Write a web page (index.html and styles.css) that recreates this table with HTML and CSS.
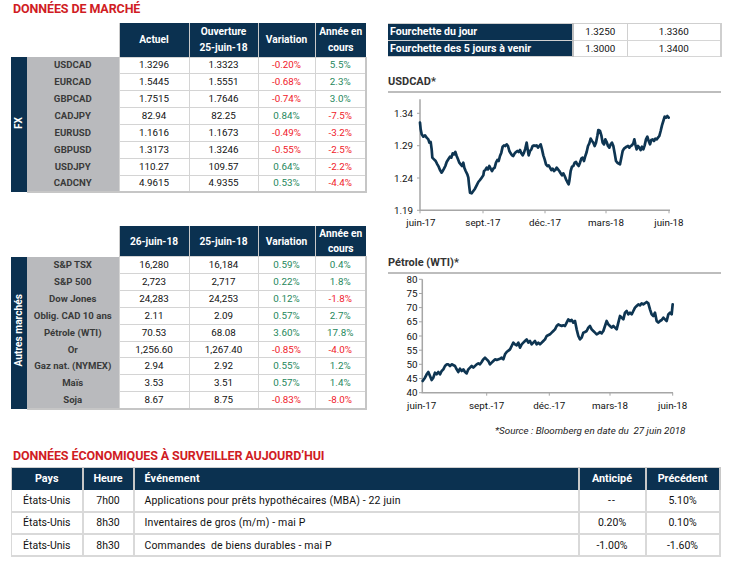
FILE: index.html
```html
<!DOCTYPE html>
<html lang="fr">
<head>
<meta charset="utf-8">
<title>Données de marché</title>
<link rel="stylesheet" href="styles.css">
</head>
<body>
<div class="page">
  <div class="top">
    <section class="left">
      <h1 class="title">DONNÉES DE MARCHÉ</h1>
      <table class="mkt fx">
        <colgroup><col class="c-side"><col class="c-lbl"><col class="c-a"><col class="c-b"><col class="c-c"><col class="c-d"></colgroup>
        <thead>
          <tr><th class="blank" colspan="2"></th><th>Actuel</th><th>Ouverture<br>25-juin-18</th><th>Variation</th><th>Année en<br>cours</th></tr>
        </thead>
        <tbody>
          <tr><td class="side" rowspan="8"><span>FX</span></td><td class="lbl">USDCAD</td><td>1.3296</td><td>1.3323</td><td class="neg">-0.20%</td><td class="pos">5.5%</td></tr>
          <tr><td class="lbl">EURCAD</td><td>1.5445</td><td>1.5551</td><td class="neg">-0.68%</td><td class="pos">2.3%</td></tr>
          <tr><td class="lbl">GBPCAD</td><td>1.7515</td><td>1.7646</td><td class="neg">-0.74%</td><td class="pos">3.0%</td></tr>
          <tr><td class="lbl">CADJPY</td><td>82.94</td><td>82.25</td><td class="pos">0.84%</td><td class="neg">-7.5%</td></tr>
          <tr><td class="lbl">EURUSD</td><td>1.1616</td><td>1.1673</td><td class="neg">-0.49%</td><td class="neg">-3.2%</td></tr>
          <tr><td class="lbl">GBPUSD</td><td>1.3173</td><td>1.3246</td><td class="neg">-0.55%</td><td class="neg">-2.5%</td></tr>
          <tr><td class="lbl">USDJPY</td><td>110.27</td><td>109.57</td><td class="pos">0.64%</td><td class="neg">-2.2%</td></tr>
          <tr><td class="lbl">CADCNY</td><td>4.9615</td><td>4.9355</td><td class="pos">0.53%</td><td class="neg">-4.4%</td></tr>
        </tbody>
      </table>

      <table class="mkt oth">
        <colgroup><col class="c-side"><col class="c-lbl"><col class="c-a"><col class="c-b"><col class="c-c"><col class="c-d"></colgroup>
        <thead>
          <tr><th class="blank" colspan="2"></th><th>26-juin-18</th><th>25-juin-18</th><th>Variation</th><th>Année en<br>cours</th></tr>
        </thead>
        <tbody>
          <tr><td class="side" rowspan="9"><span>Autres marchés</span></td><td class="lbl">S&amp;P TSX</td><td>16,280</td><td>16,184</td><td class="pos">0.59%</td><td class="pos">0.4%</td></tr>
          <tr><td class="lbl">S&amp;P 500</td><td>2,723</td><td>2,717</td><td class="pos">0.22%</td><td class="pos">1.8%</td></tr>
          <tr><td class="lbl">Dow Jones</td><td>24,283</td><td>24,253</td><td class="pos">0.12%</td><td class="neg">-1.8%</td></tr>
          <tr><td class="lbl">Oblig. CAD 10 ans</td><td>2.11</td><td>2.09</td><td class="pos">0.57%</td><td class="pos">2.7%</td></tr>
          <tr><td class="lbl">Pétrole (WTI)</td><td>70.53</td><td>68.08</td><td class="pos">3.60%</td><td class="pos">17.8%</td></tr>
          <tr><td class="lbl">Or</td><td>1,256.60</td><td>1,267.40</td><td class="neg">-0.85%</td><td class="neg">-4.0%</td></tr>
          <tr><td class="lbl">Gaz nat. (NYMEX)</td><td>2.94</td><td>2.92</td><td class="pos">0.55%</td><td class="pos">1.2%</td></tr>
          <tr><td class="lbl">Maïs</td><td>3.53</td><td>3.51</td><td class="pos">0.57%</td><td class="pos">1.4%</td></tr>
          <tr><td class="lbl">Soja</td><td>8.67</td><td>8.75</td><td class="neg">-0.83%</td><td class="neg">-8.0%</td></tr>
        </tbody>
      </table>
    </section>

    <section class="right">
      <table class="range">
        <colgroup><col class="r-h"><col class="r-a"><col class="r-b"></colgroup>
        <tr><th>Fourchette du jour</th><td>1.3250</td><td>1.3360</td></tr>
        <tr><th>Fourchette des 5 jours à venir</th><td>1.3000</td><td>1.3400</td></tr>
      </table>

      <h2 class="chart-title t1">USDCAD*</h2>
      <svg class="chart" width="362" height="140" viewBox="0 0 362 140">
        <path class="axis" d="M40 6.3V117.3H290"/>
        <path class="tick" d="M37 20.3H40M37 52.7H40M37 85H40M37 117.3H40M40 117.3v3M103 117.3v3M165 117.3v3M226 117.3v3M289 117.3v3"/>
        <text class="ylab" x="33" y="20.3">1.34</text>
        <text class="ylab" x="33" y="52.7">1.29</text>
        <text class="ylab" x="33" y="85">1.24</text>
        <text class="ylab" x="33" y="117.3">1.19</text>
        <text class="xlab" x="41" y="129.5">juin-17</text>
        <text class="xlab" x="103" y="129.5">sept.-17</text>
        <text class="xlab" x="165" y="129.5">déc.-17</text>
        <text class="xlab" x="226" y="129.5">mars-18</text>
        <text class="xlab" x="289" y="129.5">juin-18</text>
        <g transform="translate(0,3) scale(0.33333)">
          <polyline class="series" points="120,80 122,100 125,115 130,122 135,118 140,125 145,130 148,140 152,138 155,160 157,185 162,190 167,195 172,205 176,212 180,222 185,230 188,225 192,218 196,210 200,198 205,190 210,182 214,185 218,172 222,175 226,168 230,180 234,190 238,200 242,205 246,210 250,200 253,215 257,225 262,235 265,245 267,265 270,290 275,292 280,285 285,278 290,268 295,258 300,252 305,245 310,238 312,225 316,222 320,215 324,220 328,210 332,218 336,225 340,218 344,215 348,200 352,192 356,195 360,180 364,170 368,152 372,148 376,150 380,145 384,150 388,165 392,172 396,178 400,180 404,172 408,168 412,165 416,168 420,162 424,172 428,178 432,170 436,158 440,140 443,160 446,178 450,165 454,160 458,150 462,148 466,150 470,148 474,155 478,150 482,145 486,160 490,178 494,190 498,205 502,210 506,208 510,215 514,222 518,218 522,225 526,222 530,215 534,220 538,225 542,232 546,238 550,232 554,240 558,250 562,258 566,265 568,255 572,225 576,212 580,210 584,200 588,198 592,205 596,210 600,200 604,188 608,185 612,195 616,180 620,168 624,150 628,142 632,128 636,135 640,140 644,150 648,140 652,120 655,102 660,105 664,118 668,140 672,145 676,130 680,138 684,150 688,155 692,145 696,140 700,150 704,172 708,195 712,200 716,203 720,205 724,185 728,165 732,158 736,155 740,152 744,150 748,155 752,150 756,148 760,142 763,130 766,145 770,160 774,150 778,155 782,162 786,152 790,160 794,148 798,130 802,122 806,135 810,145 814,132 818,130 822,135 826,128 830,130 834,125 838,120 842,105 846,88 850,75 854,62 858,65 862,60 866,65"/>
        </g>
      </svg>

      <h2 class="chart-title t2">Pétrole (WTI)*</h2>
      <svg class="chart" width="362" height="142" viewBox="0 0 362 142">
        <path class="axis" d="M42.3 5.3V118.7H293"/>
        <path class="tick" d="M39 5.3H42.3M39 19.5H42.3M39 33.6H42.3M39 47.8H42.3M39 62H42.3M39 76.2H42.3M39 90.3H42.3M39 104.5H42.3M39 118.7H42.3M106.7 118.7v3M169.3 118.7v3M230 118.7v3M292.7 118.7v3"/>
        <text class="ylab" x="37.5" y="5.3">80</text>
        <text class="ylab" x="37.5" y="19.5">75</text>
        <text class="ylab" x="37.5" y="33.6">70</text>
        <text class="ylab" x="37.5" y="47.8">65</text>
        <text class="ylab" x="37.5" y="62">60</text>
        <text class="ylab" x="37.5" y="76.2">55</text>
        <text class="ylab" x="37.5" y="90.3">50</text>
        <text class="ylab" x="37.5" y="104.5">45</text>
        <text class="ylab" x="37.5" y="118.7">40</text>
        <text class="xlab" x="41.7" y="131.5">juin-17</text>
        <text class="xlab" x="106.7" y="131.5">sept.-17</text>
        <text class="xlab" x="169.3" y="131.5">déc.-17</text>
        <text class="xlab" x="230" y="131.5">mars-18</text>
        <text class="xlab" x="292.7" y="131.5">juin-18</text>
        <g transform="translate(0,-28) scale(0.33333)">
          <polyline class="series" points="128,405 135,395 140,385 145,378 150,390 155,402 160,395 165,380 170,385 175,378 180,385 185,375 190,370 195,360 200,355 205,355 210,360 215,355 225,360 230,370 235,378 240,368 245,375 250,370 255,378 260,382 265,370 270,365 275,360 280,365 290,355 295,352 300,355 305,348 310,340 315,335 320,340 325,345 330,355 335,350 340,345 345,340 350,342 360,338 365,335 370,340 375,325 380,318 390,310 395,300 400,290 405,295 410,298 415,290 420,305 425,295 430,290 435,285 440,280 445,290 450,285 455,295 460,290 465,285 470,295 475,290 480,295 490,285 495,280 500,270 510,265 515,260 520,255 525,250 530,240 535,235 540,238 545,240 550,238 555,240 560,230 565,220 570,225 575,222 580,230 585,225 590,250 595,270 600,280 605,275 610,260 615,258 620,255 625,245 630,240 635,250 640,255 645,260 650,265 655,262 660,258 665,262 670,255 675,240 680,225 685,235 690,240 695,245 700,240 705,245 710,250 715,230 720,210 725,215 730,220 735,200 740,195 745,205 750,200 755,205 760,195 765,185 770,180 775,175 780,178 785,172 790,175 800,168 805,172 810,190 815,205 820,210 825,200 830,225 835,230 840,225 845,222 850,215 855,220 860,225 865,205 870,200 875,205 878,175"/>
        </g>
      </svg>
      <p class="source">*Source : Bloomberg en date du&nbsp; 27 juin 2018</p>
    </section>
  </div>

  <section class="bottom">
    <h1 class="title title-eco">DONNÉES ÉCONOMIQUES À SURVEILLER AUJOURD’HUI</h1>
    <table class="eco">
      <colgroup><col class="e-p"><col class="e-h"><col class="e-e"><col class="e-a"><col class="e-r"></colgroup>
      <thead>
        <tr><th>Pays</th><th>Heure</th><th class="ev">Événement</th><th>Anticipé</th><th>Précédent</th></tr>
      </thead>
      <tbody>
        <tr><td>États-Unis</td><td>7h00</td><td class="ev">Applications pour prêts hypothécaires (MBA) - 22 juin</td><td class="dash">--</td><td>5.10%</td></tr>
        <tr><td>États-Unis</td><td>8h30</td><td class="ev">Inventaires de gros (m/m) - mai P</td><td>0.20%</td><td>0.10%</td></tr>
        <tr><td>États-Unis</td><td>8h30</td><td class="ev">Commandes&nbsp; de biens durables - mai P</td><td>-1.00%</td><td>-1.60%</td></tr>
      </tbody>
    </table>
  </section>
</div>
</body>
</html>
```

FILE: styles.css
```css
* { box-sizing: border-box; margin: 0; padding: 0; }

body {
  margin: 0;
  background: #fff;
  color: #111;
  font-family: Roboto, "Liberation Sans", sans-serif;
  font-size: 10px;
}

.page { width: 742px; height: 564px; overflow: hidden; }

.top { display: flex; height: 440px; }

.left { width: 380px; padding-left: 11px; }

.title {
  font-size: 12.5px;
  font-weight: bold;
  color: #d01c24;
  line-height: 14px;
  height: 23px;
  padding: 2px 0 0 2px;
  letter-spacing: -0.1px;
}

/* market tables */
.mkt { border-collapse: collapse; table-layout: fixed; width: 355px; }
.c-side { width: 16px; }
.c-lbl { width: 92px; }
.c-a { width: 70px; }
.c-b { width: 69px; }
.c-c { width: 57px; }
.c-d { width: 51px; }

.mkt th {
  background: #0b3150;
  color: #fff;
  font-weight: bold;
  font-size: 10.2px;
  line-height: 16px;
  text-align: center;
  padding: 0;
  border-left: 1px solid #c9c9c9;
}
.mkt th.blank { background: #fff; border: none; }
.fx thead tr { height: 34px; }
.oth thead tr { height: 30px; }
.oth thead th { line-height: 15px; }
.oth { margin-top: 33px; }

.mkt tbody tr { height: 16.9px; }
.mkt td {
  text-align: center;
  font-size: 9.8px;
  line-height: 14px;
  padding: 0;
  border: 1px solid #d4d4d4;
  color: #111;
}
.mkt td:last-child { border-right: 2px solid #c6c6c6; }
.mkt tbody tr:last-child td { border-bottom: 2px solid #c6c6c6; }
.mkt td.lbl {
  background: #b9babd;
  border: none;
  font-weight: bold;
  font-size: 9.6px;
  color: #3a3a3a;
}
.mkt td.side {
  background: #0b3150;
  border: none;
  color: #fff;
  font-weight: bold;
  vertical-align: middle;
}
.side span {
  display: inline-block;
  writing-mode: vertical-rl;
  transform: rotate(180deg);
  font-size: 10.2px;
  line-height: 16px;
}

.neg { color: #f0202a !important; }
.pos { color: #25875b !important; }

/* right column */
.right { width: 362px; padding: 23px 21px 0 8px; }

.range {
  border-collapse: collapse;
  table-layout: fixed;
  width: 333px;
  border-top: 1px solid #cfcfcf;
}
.r-h { width: 185px; }
.r-a { width: 54px; }
.r-b { width: 94px; }
.range tr { height: 16.5px; }
.range th {
  background: #0b3150;
  color: #fff;
  font-weight: bold;
  font-size: 10.6px;
  text-align: left;
  padding: 0 0 0 2px;
  border-bottom: 1px solid #d0d0d0;
  border-right: 2px solid #c0c0c0;
}
.range td {
  text-align: center;
  font-size: 9.8px;
  border-bottom: 1px solid #d6d6d6;
  border-right: 1px solid #d0d0d0;
}
.range td:last-child { border-right: 2px solid #cfcfcf; }

.chart-title {
  font-size: 11px;
  font-weight: bold;
  color: #333;
  line-height: 14px;
  padding: 0 0 2px 0;
  border-bottom: 2px solid #bdbdbd;
  width: 333px;
}
.t1 { margin-top: 18px; }
.t2 { margin-top: 23px; }

.chart { display: block; margin-left: -8px; overflow: visible; }
.chart .axis { fill: none; stroke: #a6a6a6; stroke-width: 1.5; }
.chart .tick { fill: none; stroke: #a6a6a6; stroke-width: 1; }
.chart .series {
  fill: none;
  stroke: #0e3552;
  stroke-width: 2.7;
  stroke-linejoin: round;
  stroke-linecap: round;
  vector-effect: non-scaling-stroke;
}
.chart text { font-size: 9.8px; fill: #111; dominant-baseline: central; }
.chart .ylab { text-anchor: end; }
.chart .xlab { text-anchor: middle; }

.source {
  font-style: italic;
  font-size: 9.8px;
  line-height: 12px;
  margin: 9px 0 0 107px;
  color: #222;
  white-space: nowrap;
}

/* bottom */
.bottom { padding-left: 11px; }
.title-eco { padding: 9px 0 0 2px; height: 27px; }

.eco {
  border-collapse: collapse;
  table-layout: fixed;
  width: 708px;
  border-top: 1px solid #cfcfcf;
  border-left: 1px solid #cfcfcf;
}
.e-p { width: 71px; }
.e-h { width: 51px; }
.e-e { width: 445px; }
.e-a { width: 67px; }
.e-r { width: 74px; }
.eco th {
  background: #0b3150;
  color: #fff;
  font-weight: bold;
  font-size: 10.8px;
  height: 22px;
  text-align: center;
  padding: 0;
  border-left: 2px solid #c8c8c8;
}
.eco th:first-child { border-left: none; }
.eco th:last-child { border-right: 2px solid #c8c8c8; }
.eco td {
  height: 22.3px;
  font-size: 10.5px;
  text-align: center;
  padding: 0;
  border: 1px solid #d9d9d9;
  border-width: 0 2px 2px 0;
  color: #111;
}
.eco td:first-child { border-left: 1px solid #d9d9d9; }
.eco .ev { text-align: left; padding-left: 10px; letter-spacing: 0.15px; }
.eco td.dash { letter-spacing: 1px; font-feature-settings: "liga" 0; }
```
